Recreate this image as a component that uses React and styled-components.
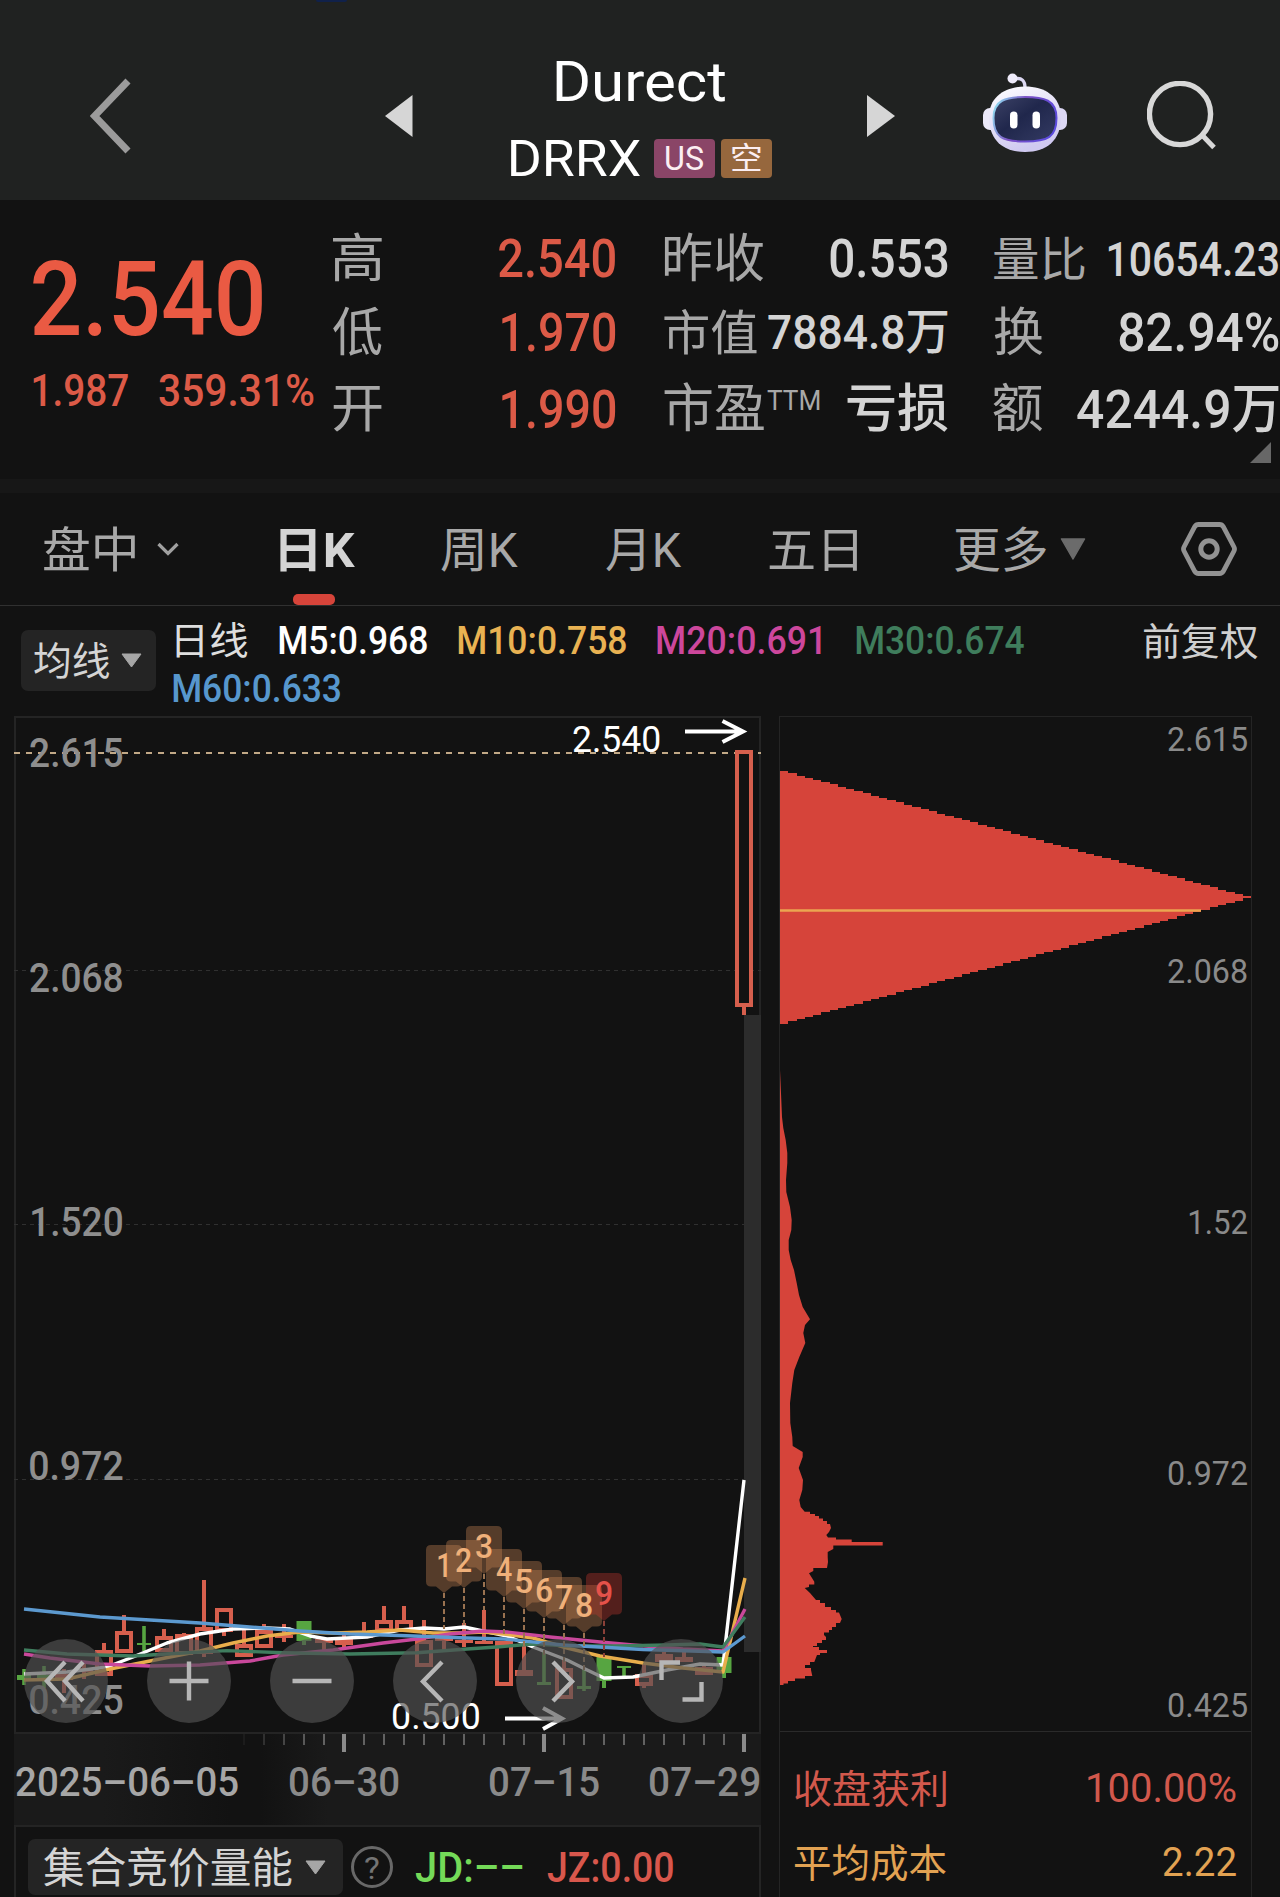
import React, { useLayoutEffect, useRef, useState } from "react";
import styled, { createGlobalStyle } from "styled-components";

const C = {
  red: "#dc5a47",
  candle: "#d65f4d",
  fill: "#d6443a",
  green: "#57a541",
  label: "#a8a8a8",
  value: "#d4d4d4",
  line: "#242424",
};

const GlobalStyle = createGlobalStyle`
  html, body { margin: 0; background: #121212; }
  body {
    font-family: Roboto, "Noto Sans CJK SC", sans-serif;
    overflow: hidden;
  }
  * { box-sizing: border-box; }
  svg { display: block; flex: none; }
`;

/* ---------- text condensed to a given ink width ---------- */

const FitBox = styled.span`
  display: block;
  flex: none;
  width: ${(p) => p.$w}px;
  margin-left: ${(p) => p.$gap || 0}px;
  font-size: ${(p) => p.$size}px;
  font-weight: ${(p) => p.$weight || 400};
  color: ${(p) => p.$color || "inherit"};
  line-height: 1;
  height: 1em;
  white-space: nowrap;
`;

const FitInner = styled.span`
  display: block;
  width: max-content;
  transform-origin: 0 0;
`;

function Fit({ w, size, weight, color, gap, dy = 1, className, children }) {
  const ref = useRef(null);
  const [transform, setTransform] = useState("none");
  useLayoutEffect(() => {
    const cs = getComputedStyle(ref.current);
    const ctx = document.createElement("canvas").getContext("2d");
    ctx.font = `${cs.fontWeight} ${cs.fontSize} ${cs.fontFamily}`;
    const m = ctx.measureText(ref.current.textContent);
    const ink = m.actualBoundingBoxLeft + m.actualBoundingBoxRight;
    setTransform(`scaleX(${w / ink}) translate(${m.actualBoundingBoxLeft}px, ${dy}px)`);
  }, [w, size, weight, dy, children]);
  return (
    <FitBox $w={w} $size={size} $weight={weight} $color={color} $gap={gap} className={className}>
      <FitInner ref={ref} style={{ transform }}>{children}</FitInner>
    </FitBox>
  );
}

const Screen = styled.div`
  width: 1280px;
  height: 1897px;
  overflow: hidden;
  background: #121212;
  display: flex;
  flex-direction: column;
`;

/* ---------- header ---------- */

const Header = styled.header`
  position: relative;
  height: 200px;
  padding: 32px 0 0 89.5px;
  background: #202221;
  display: flex;
  align-items: center;
`;

const StatusTrace = styled.i`
  position: absolute;
  left: 316px;
  top: 0;
  width: 31px;
  height: 2px;
  border-radius: 0 0 8px 8px;
  background: #10214a;
`;

const HeaderIcon = styled.div`
  margin-left: ${(p) => p.$gap || 0}px;
`;

const TitleBlock = styled.div`
  width: 262px;
  margin-left: 98.5px;
  align-self: flex-start;
  color: #fff;
`;

const TitleRow = styled.div`
  height: ${(p) => p.$h}px;
  display: flex;
  align-items: center;
  justify-content: ${(p) => (p.$center ? "center" : "flex-start")};
`;

const Badge = styled.span`
  width: ${(p) => p.$w}px;
  height: 39px;
  margin-left: ${(p) => p.$gap}px;
  border-radius: 4px;
  background: ${(p) => p.$bg};
  color: #fbeef2;
  display: flex;
  align-items: center;
  justify-content: center;
`;

const Robot = () => (
  <svg width="86" height="88" viewBox="0 1 86 88">
    <defs>
      <linearGradient id="shell" x1="0" y1="0" x2="0.4" y2="1">
        <stop offset="0" stopColor="#ffffff" />
        <stop offset="0.5" stopColor="#e6e2f8" />
        <stop offset="1" stopColor="#cfc9f0" />
      </linearGradient>
      <linearGradient id="rim" x1="0" y1="0.3" x2="1" y2="0.6">
        <stop offset="0" stopColor="#8fd4ee" />
        <stop offset="0.4" stopColor="#7b4fc4" />
        <stop offset="1" stopColor="#5b4be0" />
      </linearGradient>
      <linearGradient id="visor" x1="0" y1="0" x2="1" y2="1">
        <stop offset="0" stopColor="#3c4266" />
        <stop offset="0.45" stopColor="#20274c" />
        <stop offset="1" stopColor="#343b63" />
      </linearGradient>
    </defs>
    <path d="M32 8 C40 6 43 10 43 17" fill="none" stroke="#dcd8f2" strokeWidth="3.4" />
    <circle cx="30.500" cy="7.500" r="5" fill="#efecfb" />
    <rect x="1" y="37" width="16" height="22" rx="7" fill="#eceafa" />
    <rect x="69" y="37" width="16" height="22" rx="7" fill="#dcd8f5" />
    <path d="M43 15.500 C62 15.500 79 25 79 46 C79 69 65 81 43 81 C21 81 7 69 7 46 C7 25 24 15.500 43 15.500Z" fill="url(#shell)" />
    <path d="M43 26 C62 26 74.500 29 74.500 47 C74.500 66 66 70.500 43 70.500 C20 70.500 11.500 66 11.500 47 C11.500 29 24 26 43 26Z" fill="url(#visor)" stroke="url(#rim)" strokeWidth="2" />
    <rect x="28" y="40.500" width="7.500" height="17" rx="3.750" fill="#fff" />
    <rect x="50.500" y="40.500" width="7.500" height="17" rx="3.750" fill="#fff" />
  </svg>
);

function TopBar() {
  return (
    <Header>
      <StatusTrace />
      <HeaderIcon>
        <svg width="42" height="76" viewBox="0 0 42 76">
          <path d="M38 3 L4.500 38 L38 73" fill="none" stroke="#9b9b9b" strokeWidth="7" />
        </svg>
      </HeaderIcon>
      <HeaderIcon $gap={253}>
        <svg width="28" height="42" viewBox="0 0 28 42"><path d="M27.500 0V42L0 21Z" fill="#d6d6d6" /></svg>
      </HeaderIcon>
      <TitleBlock>
        <TitleRow $h={96} $center>
          <Fit w={169.5} size={56} dy={1.5} gap={-2}>Durect</Fit>
        </TitleRow>
        <TitleRow $h={60}>
          <Fit w={130} size={50}>DRRX</Fit>
          <Badge $w={60.5} $gap={13} $bg="#8a4567"><Fit w={37.5} size={33} dy={0}>US</Fit></Badge>
          <Badge $w={51} $gap={6.5} $bg="#96673d"><Fit w={28.5} size={31} dy={0}>空</Fit></Badge>
        </TitleRow>
      </TitleBlock>
      <HeaderIcon $gap={94}>
        <svg width="28" height="42" viewBox="0 0 28 42"><path d="M0 0V42L28 21Z" fill="#d6d6d6" /></svg>
      </HeaderIcon>
      <HeaderIcon $gap={86.5}><Robot /></HeaderIcon>
      <HeaderIcon $gap={79}>
        <svg width="70" height="70" viewBox="0 0 70 70">
          <circle cx="33" cy="33" r="30.600" fill="none" stroke="#d8d8d8" strokeWidth="5.400" />
          <path d="M55 54 L67 66.500" stroke="#d8d8d8" strokeWidth="5" />
        </svg>
      </HeaderIcon>
    </Header>
  );
}

/* ---------- quote ---------- */

const Quote = styled.section`
  position: relative;
  height: 279px;
  display: flex;
  padding-left: 33px;
`;

const PriceBlock = styled.div`
  width: 300px;
  padding-top: 60px;
`;

const PriceRow = styled.div`
  height: ${(p) => p.$h}px;
  margin-bottom: 33px;
  display: flex;
  align-items: center;
`;

const QuoteColumn = styled.div`
  width: ${(p) => p.$w}px;
  margin-right: ${(p) => p.$gap}px;
  padding-top: 20px;
  display: grid;
  grid-template-rows: 75px 73px 80px;
`;

const QuoteRow = styled.div`
  display: flex;
  align-items: center;
  justify-content: space-between;
  color: ${C.value};
`;

const QuoteLabel = styled.div`
  display: flex;
  align-items: center;
  color: ${C.label};
`;

const Ttm = styled.div`
  margin: 0 0 16px 3px;
`;

const Corner = styled.div`
  position: absolute;
  left: 1250px;
  top: 242px;
`;

const quoteColumns = [
  { w: 282.5, gap: 48, rows: [
    { k: "高", kw: 49, v: "2.540", vw: 116.5, color: C.red },
    { k: "低", kw: 49, v: "1.970", vw: 113.5, color: C.red },
    { k: "开", kw: 49, v: "1.990", vw: 113.5, color: C.red },
  ] },
  { w: 284.5, gap: 45.5, rows: [
    { k: "昨收", kw: 100, v: "0.553", vw: 118 },
    { k: "市值", kw: 92.5, ks: 48, v: "7884.8万", vw: 180, vs: 49 },
    { k: "市盈", kw: 100, ttm: true, v: "亏损", vw: 101, vs: 52 },
  ] },
  { w: 284.5, gap: 0, rows: [
    { k: "量比", kw: 91, ks: 47, v: "10654.23", vw: 170, vs: 48 },
    { k: "换", kw: 49, v: "82.94%", vw: 159.5 },
    { k: "额", kw: 49, v: "4244.9万", vw: 201.5 },
  ] },
];

function QuotePanel() {
  return (
    <Quote>
      <PriceBlock>
        <PriceRow $h={76}><Fit w={229} size={104} weight={500} color="#ea5a43" dy={1.5}>2.540</Fit></PriceRow>
        <PriceRow $h={40}>
          <Fit w={95} size={45} weight={500} color={C.red}>1.987</Fit>
          <Fit w={155} size={45} weight={500} color={C.red} gap={30.5}>359.31%</Fit>
        </PriceRow>
      </PriceBlock>
      {quoteColumns.map((col, i) => (
        <QuoteColumn key={i} $w={col.w} $gap={col.gap}>
          {col.rows.map((r) => (
            <QuoteRow key={r.k}>
              <QuoteLabel>
                <Fit w={r.kw} size={r.ks || 52} dy={2}>{r.k}</Fit>
                {r.ttm && <Ttm><Fit w={53} size={28}>TTM</Fit></Ttm>}
              </QuoteLabel>
              <Fit w={r.vw} size={r.vs || 53} weight={500} color={r.color} dy={r.vs === 49 ? 1 : 2}>{r.v}</Fit>
            </QuoteRow>
          ))}
        </QuoteColumn>
      ))}
      <Corner>
        <svg width="21" height="21" viewBox="0 0 21 21"><path d="M21 0V21H0Z" fill="#676767" /></svg>
      </Corner>
    </Quote>
  );
}

const Divider = styled.div`
  height: 14px;
  background: #171717;
`;

/* ---------- tabs ---------- */

const Tabs = styled.nav`
  height: 113px;
  padding-left: 44px;
  border-bottom: 1px solid #303030;
  display: flex;
`;

const Tab = styled.div`
  position: relative;
  height: 112px;
  margin-left: ${(p) => p.$gap || 0}px;
  color: ${(p) => (p.$active ? C.value : C.label)};
  display: flex;
  align-items: center;
`;

const Indicator = styled.i`
  position: absolute;
  left: 13px;
  bottom: 0;
  width: 42px;
  height: 11px;
  border-radius: 5px;
  background: ${C.fill};
`;

const TabIcon = styled.span`
  margin-left: ${(p) => p.$gap || 0}px;
`;

function PeriodTabs() {
  return (
    <Tabs>
      <Tab>
        <Fit w={91.5} size={48} dy={2}>盘中</Fit>
        <TabIcon $gap={21.5}>
          <svg width="22" height="14" viewBox="0 0 22 14"><path d="M1.500 2 L11 11.500 L20.500 2" fill="none" stroke="#a0a0a0" strokeWidth="3.200" /></svg>
        </TabIcon>
      </Tab>
      <Tab $gap={100.5} $active>
        <Fit w={75} size={48} weight={700} dy={2}>日K</Fit>
        <Indicator />
      </Tab>
      <Tab $gap={86}><Fit w={77.5} size={48} dy={2}>周K</Fit></Tab>
      <Tab $gap={88}><Fit w={76} size={48} dy={2}>月K</Fit></Tab>
      <Tab $gap={86.5}><Fit w={88} size={48} dy={2}>五日</Fit></Tab>
      <Tab $gap={98.5}>
        <Fit w={91.5} size={48} dy={2}>更多</Fit>
        <TabIcon $gap={13}>
          <svg width="26" height="22" viewBox="0 0 26 22"><path d="M1.500 1H24.500L13 21Z" fill="#6b6b6b" stroke="#6b6b6b" strokeWidth="1.500" strokeLinejoin="round" /></svg>
        </TabIcon>
      </Tab>
      <Tab $gap={95.5}>
        <svg width="56" height="56" viewBox="0 0 56 56">
          <path d="M17.500 3.500H38.500Q41 3.500 42.300 5.700L53 26Q54 28 53 30L42.300 50.300Q41 52.500 38.500 52.500H17.500Q15 52.500 13.700 50.300L3 30Q2 28 3 26L13.700 5.700Q15 3.500 17.500 3.500Z" fill="none" stroke="#929292" strokeWidth="4.800" />
          <circle cx="28" cy="28" r="8.200" fill="none" stroke="#929292" strokeWidth="5" />
        </svg>
      </Tab>
    </Tabs>
  );
}

/* ---------- moving average legend ---------- */

const Legend = styled.section`
  height: 110px;
  padding-left: 21px;
  display: flex;
  align-items: flex-start;
`;

const DropButton = styled.button`
  width: ${(p) => p.$w}px;
  height: ${(p) => p.$h}px;
  margin: ${(p) => p.$top}px 0 0;
  padding: 0 0 0 ${(p) => p.$pad}px;
  border: 0;
  border-radius: 7px;
  background: #242424;
  color: ${C.value};
  font-family: inherit;
  display: flex;
  align-items: center;
`;

const Arrow = styled.span`
  margin-left: ${(p) => p.$gap}px;
`;

const LegendLines = styled.div`
  margin-left: 20px;
  padding-top: 10px;
`;

const LegendLine = styled.div`
  height: 48px;
  display: flex;
  align-items: center;
`;

const DownArrow = () => (
  <svg width="21" height="15" viewBox="0 0 21 15"><path d="M1 1H20L10.500 14Z" fill="#a6a6a6" stroke="#a6a6a6" strokeLinejoin="round" /></svg>
);

function MaLegend() {
  return (
    <Legend>
      <DropButton $w={134.5} $h={61} $top={24} $pad={12.5}>
        <Fit w={75.5} size={39} dy={1.5}>均线</Fit>
        <Arrow $gap={11.5}><DownArrow /></Arrow>
      </DropButton>
      <LegendLines>
        <LegendLine>
          <Fit w={71.5} size={38} color="#dedede" gap={0.5}>日线</Fit>
          <Fit w={148} size={38} color="#fff" weight={500} gap={31}>M5:0.968</Fit>
          <Fit w={168} size={38} color="#e9b252" weight={500} gap={31}>M10:0.758</Fit>
          <Fit w={164} size={38} color="#cd479c" weight={500} gap={31}>M20:0.691</Fit>
          <Fit w={168} size={38} color="#3f7d5c" weight={500} gap={35.5}>M30:0.674</Fit>
          <Fit w={113.5} size={38} color="#cfcfcf" gap={119.5} dy={1.5}>前复权</Fit>
        </LegendLine>
        <LegendLine><Fit w={167.5} size={38} color="#5797cd" weight={500} gap={-2.5}>M60:0.633</Fit></LegendLine>
      </LegendLines>
    </Legend>
  );
}

/* ---------- charts ---------- */

const Charts = styled.main`
  height: 1181px;
  padding-left: 14px;
  display: flex;
  gap: 18px;
`;

const ChartPanel = styled.section`
  width: 747px;
  display: flex;
  flex-direction: column;
`;

const Plot = styled.div`
  position: relative;
  height: 1018px;
  box-shadow: inset 0 0 0 2px ${C.line};
`;

const PlotLabel = styled.div`
  position: absolute;
  left: ${(p) => p.$x}px;
  top: ${(p) => p.$y}px;
`;

const Controls = styled.div`
  position: absolute;
  left: 10px;
  top: 923px;
  display: flex;
  gap: 39px;
`;

const RoundButton = styled.button`
  width: 84px;
  height: 84px;
  padding: 0;
  border: 0;
  border-radius: 50%;
  background: rgba(82, 82, 82, 0.66);
  display: grid;
  place-items: center;
`;

/* [x, wickTop, wickBottom, bodyTop, bodyBottom, kind]; kinds: r hollow, f narrow red bar, g filled green, + green doji */
const candles = [
  [24, 1669, 1685, 1675, 1680, "+"], [44, 1666, 1688, 1675, 1678, "+"],
  [64, 1669, 1693, 1674, 1680, "f"], [84, 1662, 1679, 1668, 1672, "f"],
  [104, 1643, 1676, 1650, 1676, "r"], [124, 1615, 1631, 1631, 1653, "r"],
  [144, 1626, 1651, 1643, 1645, "+"], [164, 1629, 1636, 1636, 1652, "r"],
  [184, 1633, 1655, 1634, 1655, "r"], [204, 1580, 1657, 1627, 1654, "r"],
  [224, 1632, 1636, 1608, 1632, "r"], [244, 1628, 1645, 1644, 1657, "r"],
  [264, 1624, 1630, 1630, 1648, "r"], [284, 1624, 1642, 1635, 1638, "f"],
  [304, 1621, 1645, 1621, 1641, "g"], [324, 1638, 1650, 1639, 1643, "f"],
  [344, 1635, 1647, 1638, 1645, "r"], [364, 1622, 1638, 1635, 1638, "f"],
  [384, 1606, 1620, 1620, 1632, "r"], [404, 1606, 1620, 1620, 1632, "r"],
  [424, 1620, 1640, 1640, 1667, "r"], [444, 1637, 1652, 1638, 1641, "f"],
  [464, 1623, 1647, 1640, 1643, "f"], [484, 1610, 1644, 1641, 1644, "f"],
  [504, 1641, 1643, 1641, 1686, "r"], [524, 1646, 1675, 1670, 1676, "f"],
  [544, 1650, 1684, 1682, 1685, "+"], [564, 1658, 1668, 1668, 1699, "r"],
  [584, 1668, 1691, 1686, 1689, "+"], [604, 1657, 1688, 1657, 1681, "g"],
  [624, 1666, 1678, 1666, 1668, "+"], [644, 1664, 1688, 1674, 1686, "r"],
  [664, 1652, 1664, 1654, 1662, "r"], [684, 1651, 1662, 1657, 1662, "r"],
  [704, 1663, 1675, 1667, 1675, "r"], [724, 1657, 1678, 1657, 1673, "g"],
  [744, 1007, 1015, 750, 1007, "r"],
];

function Candle({ d }) {
  const [x, wt, wb, bt, bb, kind] = d;
  const color = kind === "g" || kind === "+" ? C.green : C.candle;
  const w = kind === "+" ? 14 : kind === "g" ? 15 : 18;
  return (
    <g stroke={color} fill={color}>
      {kind === "r" ? (
        <>
          {wt < bt && <path d={`M${x} ${wt}V${bt}`} strokeWidth="4" />}
          {wb > bb && <path d={`M${x} ${bb}V${wb}`} strokeWidth="4" />}
          <rect x={x - 7} y={bt + 2} width="14" height={Math.max(bb - bt - 4, 1)} fill="#121212" strokeWidth="4" />
        </>
      ) : (
        <>
          <path d={`M${x} ${wt}V${wb}`} strokeWidth={kind === "+" ? 3.6 : 4} />
          <rect x={x - w / 2} y={bt} width={w} height={bb - bt} stroke="none" />
        </>
      )}
    </g>
  );
}

const averages = [
  ["#ffffff", "24,1674 67,1672 107,1667 133,1657 167,1643 200,1634 233,1629 267,1628 290,1629 310,1636 327,1639 367,1637 385,1633 400,1630 424,1628 444,1629 464,1627 483,1631 507,1636 533,1647 567,1660 583,1668 604,1678 633,1677 667,1670 700,1664 723,1665 744,1480"],
  ["#e9ae4c", "24,1680 67,1679 110,1669 150,1661 200,1651 233,1643 267,1636 300,1632 333,1633 367,1632 400,1630 433,1633 463,1633 483,1632 504,1634 533,1638 567,1648 600,1656 643,1663 683,1668 723,1672 745,1578"],
  ["#c9489b", "24,1654 50,1658 100,1664 150,1666 200,1665 250,1661 283,1655 333,1650 383,1643 417,1639 450,1634 483,1631 507,1632 550,1637 600,1642 633,1645 683,1649 723,1651 745,1609"],
  ["#3f7d5e", "24,1650 67,1654 133,1656 183,1653 227,1650.600 283,1652.700 350,1654 417,1652.700 467,1649 500,1646.700 533,1644 567,1645.700 617,1646 667,1645 700,1644 723,1647 745,1617"],
  ["#5c99cf", "24,1609 100,1617 200,1623 300,1631 350,1634 400,1635.500 467,1638 504,1639 563,1645 643,1649.500 723,1652 745,1636"],
];

const markers = [
  [444, 1545, 1629], [464, 1540, 1625], [484, 1526, 1610], [504, 1549, 1634],
  [524, 1561, 1646], [544, 1570, 1655], [564, 1577, 1665], [584, 1585, 1670], [604, 1573, 1657],
];

const ControlIcon = ({ d }) => (
  <svg width="60" height="60" viewBox="0 0 60 60"><path d={d} fill="none" stroke="#b6b6b6" strokeWidth="4.400" /></svg>
);

const controlIcons = [
  "M29 11L11 30L29 50M47 11L29 30L47 50",
  "M10.500 30H49.500M30 10.500V49.500",
  "M10.500 30H49.500",
  "M37 11L18 30.500L37 50",
  "M25 11L44 30.500L25 50",
  "M10.500 29V11.500H29M31.500 48.500H50.500V31",
];

function KlinePlot() {
  return (
    <Plot>
      <svg width="747" height="1018" viewBox="14 716 747 1018">
        <g stroke="#303030" strokeWidth="1" strokeDasharray="4 4">
          <path d="M14 970.500H761M14 1224.500H761M14 1479.500H761" />
        </g>
        <path d="M14 753H761" stroke="#c2a987" strokeWidth="2" strokeDasharray="6 6" />
        <rect x="744" y="1015" width="17" height="637" fill="#2c2c2c" />
        <g fill="none" stroke="#fff" strokeWidth="4">
          <path d="M685 731.500H741M722.500 721L743 731.500L722.500 742" />
          <path d="M505 1718.500H560M543 1708L562 1718.500L543 1729" />
        </g>
        {candles.map((d) => <Candle key={d[0]} d={d} />)}
        {averages.map(([color, points]) => (
          <polyline key={color} points={points} fill="none" stroke={color} strokeWidth="3.400" strokeLinejoin="round" />
        ))}
        {markers.map(([x, y, end], i) => (
          <g key={x}>
            <path
              d={`M${x - 13} ${y}h26q5 0 5 5v31.500q0 5 -5 5h-5l-8 6.500l-8 -6.500h-5q-5 0 -5 -5v-31.500q0 -5 5 -5z`}
              fill={i === 8 ? "rgba(200,56,48,0.36)" : "rgba(206,136,86,0.36)"}
            />
            <path d={`M${x} ${y + 48}V${end}`} stroke={i === 8 ? "#8a4038" : "#9a7250"} strokeWidth="2" strokeDasharray="5 3" />
          </g>
        ))}
      </svg>
      {markers.map(([x, y], i) => (
        <PlotLabel key={x} $x={x - 14 - (i === 0 ? 6 : 8)} $y={y - 716 + 3}>
          <Fit w={i === 0 ? 9 : 16} size={34} weight={500} dy={0} color={i === 8 ? "#e4524a" : "#efb07a"}>{String(i + 1)}</Fit>
        </PlotLabel>
      ))}
      {[["2.615", 16], ["2.068", 241], ["1.520", 485], ["0.972", 729], ["0.425", 963]].map(([t, y]) => (
        <PlotLabel key={t} $x={t === "1.520" ? 17.5 : 15.5} $y={y}>
          <Fit w={t === "1.520" ? 90.5 : 92.5} size={41} weight={500} color="#8e8e8e">{t}</Fit>
        </PlotLabel>
      ))}
      <PlotLabel $x={559} $y={5}><Fit w={86.5} size={37} color="#fff" dy={0}>2.540</Fit></PlotLabel>
      <PlotLabel $x={379} $y={982}><Fit w={86} size={37} color="#fff" dy={0}>0.500</Fit></PlotLabel>
      <Controls>
        {controlIcons.map((d) => <RoundButton key={d}><ControlIcon d={d} /></RoundButton>)}
      </Controls>
    </Plot>
  );
}

const DateBand = styled.div`
  height: 91px;
  background: linear-gradient(90deg, #1a1a1a 0, #1a1a1a 12%, #121212 29%, #121212 33%, #1a1a1a 42%);
`;

const DateRow = styled.div`
  height: 58px;
  padding-left: 1.5px;
  display: flex;
  align-items: center;
  color: #8a8a8a;
`;

const SubPanel = styled.div`
  flex: 1;
  padding-left: 12px;
  border: 2px solid ${C.line};
  border-bottom: 0;
  display: flex;
`;

const SubTools = styled.div`
  height: 56px;
  margin: 12px 0 0 8px;
  display: flex;
  align-items: center;
`;

const HelpRing = styled.span`
  width: 42px;
  height: 42px;
  border: 3px solid #686868;
  border-radius: 50%;
  color: #747474;
  display: grid;
  place-items: center;
`;

const ticks = Array.from({ length: 26 }, (_, i) => 244 + i * 20);

function KlineFooter() {
  return (
    <>
      <DateBand>
        <svg width="747" height="18" viewBox="14 0 747 18">
          {ticks.map((x) => {
            const major = x === 344 || x === 544 || x === 744;
            return (
              <path key={x} d={`M${x} 0V${major ? 18 : 11}`} stroke={major ? "#8a8a8a" : "#626262"}
                strokeWidth={major ? 4 : 2} opacity={x < 310 ? (x - 234) / 80 : 1} />
            );
          })}
        </svg>
        <DateRow>
          <Fit w={222} size={41} weight={500} color="#a6a6a6">2025–06–05</Fit>
          <Fit w={109} size={41} weight={500} gap={52.5}>06–30</Fit>
          <Fit w={109} size={41} weight={500} gap={91}>07–15</Fit>
          <Fit w={109} size={41} weight={500} gap={51}>07–29</Fit>
        </DateRow>
      </DateBand>
      <SubPanel>
        <DropButton $w={315} $h={56} $top={12} $pad={16}>
          <Fit w={248} size={42} dy={2}>集合竞价量能</Fit>
          <Arrow $gap={12.5}><DownArrow /></Arrow>
        </DropButton>
        <SubTools>
          <HelpRing><Fit w={14} size={31}>?</Fit></HelpRing>
          <Fit w={108} size={42} weight={500} color="#74da58" gap={21.5}>JD:––</Fit>
          <Fit w={126} size={42} weight={500} color="#d8574c" gap={24}>JZ:0.00</Fit>
        </SubTools>
      </SubPanel>
    </>
  );
}

/* ---------- cost distribution ---------- */

const CostPanel = styled.section`
  width: 473px;
  border: 1px solid #242424;
  border-bottom: 0;
`;

const CostPlot = styled.div`
  position: relative;
  height: 1014px;
`;

const CostRow = styled.div`
  height: ${(p) => p.$h}px;
  padding: 0 15.5px 0 15px;
  color: ${(p) => p.$color};
  display: flex;
  align-items: center;
  justify-content: space-between;
`;

const CostRows = styled.div`
  border-top: 1px solid #2a2a2a;
  padding-top: 11px;
`;

const ROWS = 113;
const ROW_H = 252.6 / ROWS;
const peak = Array.from({ length: ROWS }, (_, i) => 471 * (1 - Math.abs(i - 56) / 57));
const peakPath =
  "M780 771 " + peak.map((w, i) => `H${(780 + w).toFixed(1)}V${(771 + (i + 1) * ROW_H).toFixed(1)}`).join("") + "H780Z";

const costPath =
  "M779.700 1063 L781 1093L782 1117L783.300 1128L785.700 1140L787.300 1153V1163L786 1180L786.300 1192L790 1207L791.700 1220L791.300 1230L788.700 1240V1250L790.700 1260L794 1270L796.700 1283L799 1295L802.700 1307L810 1319.300L805 1325L803.300 1333L805.300 1343L799.300 1357L794.300 1370L792.300 1383L790 1403L790.300 1423L792.300 1437L792.700 1446L802.700 1452V1457L798.700 1468L803 1480L802.300 1490L799.300 1500L800.700 1507L804.700 1511.700H810V1514H815V1516H819V1518.500H823V1521H827V1524H830L831 1528L829 1532L826.300 1535L828 1537.500H836V1539.500H851.700V1542H882.700V1545.500H833.300V1549L827.700 1552V1557L828 1562L827 1568H813.300V1571L809 1573.300L812 1578L814.300 1581.700V1584.500H809V1587L804.700 1588L810 1593L816 1600H820V1603H825V1607H831V1610H836V1612.500H839L841.700 1619L840 1623H836V1627H832V1630H829V1632.500H824V1635L826 1637V1640H822V1643H817V1646H813V1647H819V1650H827V1653H820V1655H817L814.300 1662H810V1665H805V1668H811V1670L812.300 1676H805V1678.500H795V1681H788V1683.500H783.500V1685H779.700Z";

function CostDistribution() {
  return (
    <CostPanel>
      <CostPlot>
        <svg width="471" height="1014" viewBox="780 717 471 1014">
          <path d={peakPath} fill={C.fill} shapeRendering="crispEdges" />
          <path d="M780 910.500H1201" stroke="#eba551" strokeWidth="2.600" />
          <path d={costPath} fill={C.fill} />
        </svg>
        {[["2.615", 5, 79], ["2.068", 237, 79], ["1.52", 488, 58], ["0.972", 739, 79], ["0.425", 971, 79]].map(([t, y, w]) => (
          <PlotLabel key={t} $x={467 - w} $y={y}><Fit w={w} size={34} color="#8a8a8a" dy={0}>{t}</Fit></PlotLabel>
        ))}
      </CostPlot>
      <CostRows>
        <CostRow $h={90} $color="#d2584c">
          <Fit w={151} size={39} dy={1.5}>收盘获利</Fit>
          <Fit w={148} size={41} dy={0}>100.00%</Fit>
        </CostRow>
        <CostRow $h={58} $color="#e2a252">
          <Fit w={151} size={39} dy={1.5}>平均成本</Fit>
          <Fit w={73} size={41} dy={0}>2.22</Fit>
        </CostRow>
      </CostRows>
    </CostPanel>
  );
}

export default function App() {
  return (
    <Screen>
      <GlobalStyle />
      <TopBar />
      <QuotePanel />
      <Divider />
      <PeriodTabs />
      <MaLegend />
      <Charts>
        <ChartPanel>
          <KlinePlot />
          <KlineFooter />
        </ChartPanel>
        <CostDistribution />
      </Charts>
    </Screen>
  );
}
